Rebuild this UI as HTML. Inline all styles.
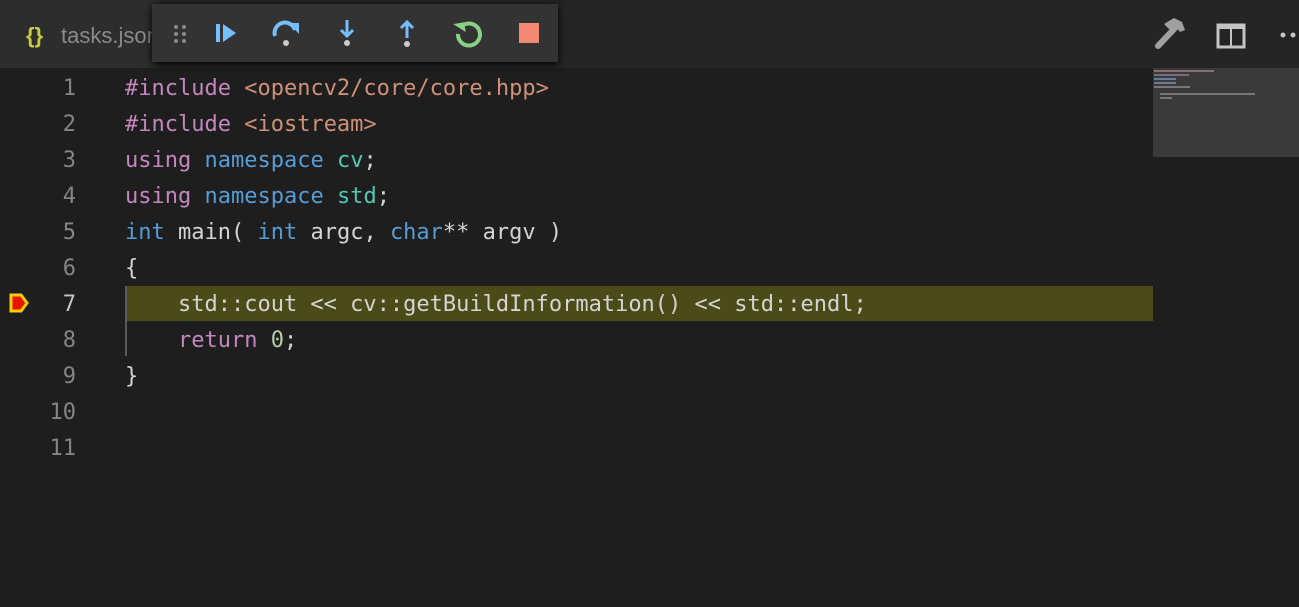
<!DOCTYPE html>
<html><head><meta charset="utf-8"><style>
body{margin:0;width:1299px;height:607px;background:#1e1e1e;overflow:hidden;position:relative;font-family:"DejaVu Sans Mono",monospace}
.tabbar{position:absolute;left:0;top:0;width:1299px;height:68px;background:#252526}
.tab{position:absolute;left:0;top:0;height:68px;width:160px;background:#2d2d2d;color:#8b8b8b;font:22px "Liberation Sans",sans-serif;line-height:72px}
.tb{position:absolute;left:152px;top:4px;width:406px;height:58px;background:#333;box-shadow:0 2px 8px #000}
.ln{position:absolute;left:0;width:76px;text-align:right;color:#858585;font-size:22px;line-height:36px}
.code{position:absolute;left:125px;font-size:22px;line-height:36px;color:#d4d4d4;white-space:pre}
.k{color:#c586c0}.s{color:#ce9178}.b{color:#569cd6}.t{color:#4ec9b0}.n{color:#b5cea8}
.mm{position:absolute;height:2px}
</style></head><body>
<div class="tabbar"></div>
<div class="tab"><span style="position:absolute;left:26px;color:#cbcb41;font-weight:bold">{}</span><span style="position:absolute;left:61px">tasks.json</span></div>
<div class="tb">
<svg width="406" height="58" style="position:absolute;left:0;top:0">
<g fill="#8a8a8a"><circle cx="24" cy="23" r="2"/><circle cx="32" cy="23" r="2"/><circle cx="24" cy="30" r="2"/><circle cx="32" cy="30" r="2"/><circle cx="24" cy="37" r="2"/><circle cx="32" cy="37" r="2"/></g>
<rect x="64" y="20" width="4" height="18" fill="#75beff"/><path d="M71 20 L84 29 L71 38Z" fill="#75beff"/>
<path d="M123 32 A10 10 0 0 1 143 26" stroke="#75beff" stroke-width="4" fill="none"/><path d="M137 19 L147 19 L147 30Z" fill="#75beff"/><circle cx="134" cy="39" r="3" fill="#ccc"/>
<path d="M195 16 V32 M189 26 L195 32 L201 26" stroke="#75beff" stroke-width="3" fill="none"/><circle cx="195" cy="39" r="3" fill="#ccc"/>
<path d="M255 34 V18 M249 24 L255 18 L261 24" stroke="#75beff" stroke-width="3" fill="none"/><circle cx="255" cy="40" r="3" fill="#ccc"/>
<path d="M310 22 A11 11 0 1 1 306 30" stroke="#89d185" stroke-width="4" fill="none"/><path d="M302 19 L313 19 L313 29 Z" fill="#89d185" transform="rotate(-10 308 24)"/>
<rect x="367" y="19" width="20" height="20" fill="#f48771"/>
</svg></div>
<svg width="150" height="68" style="position:absolute;left:1150px;top:0">
<path d="M8 46 L26 27" stroke="#a0a0a0" stroke-width="6" stroke-linecap="round"/><path d="M14 24 L24 18 L32 22 L35 30 L30 32 L26 27 L20 30Z" fill="#a0a0a0"/>
<rect x="68" y="25" width="26" height="22" fill="none" stroke="#c5c5c5" stroke-width="3"/><rect x="68" y="25" width="26" height="4" fill="#c5c5c5"/><rect x="80" y="25" width="2" height="22" fill="#c5c5c5"/>
<circle cx="133" cy="35" r="2.5" fill="#c5c5c5"/><circle cx="143" cy="35" r="2.5" fill="#c5c5c5"/>
</svg>
<div style="position:absolute;left:1153px;top:68px;width:146px;height:89px;background:#3a3a3a"></div>
<div class="mm" style="left:1154px;top:70px;width:60px;background:#8a6a70"></div>
<div class="mm" style="left:1154px;top:74px;width:35px;background:#7a6a80"></div>
<div class="mm" style="left:1154px;top:78px;width:22px;background:#6a7a9a"></div>
<div class="mm" style="left:1154px;top:82px;width:22px;background:#6a7a9a"></div>
<div class="mm" style="left:1154px;top:86px;width:36px;background:#777"></div>
<div class="mm" style="left:1160px;top:93px;width:95px;background:#777"></div>
<div class="mm" style="left:1160px;top:97px;width:12px;background:#777"></div>
<div style="position:absolute;left:125px;top:286px;width:1028px;height:35px;background:#4b4b18"></div>
<div style="position:absolute;left:125px;top:286px;width:2px;height:70px;background:#5a5a5a"></div>
<svg width="20" height="20" style="position:absolute;left:9px;top:293px"><path d="M2 2 H12 L18 10 L12 18 H2Z" fill="#e51400" stroke="#ffcc00" stroke-width="3"/></svg>
<div class="ln" style="top:71px">1<br>2<br>3<br>4<br>5<br>6<br><span style="color:#c6c6c6">7</span><br>8<br>9<br>10<br>11</div>
<div class="code" style="top:71px"><span class="k">#include</span> <span class="s">&lt;opencv2/core/core.hpp&gt;</span>
<span class="k">#include</span> <span class="s">&lt;iostream&gt;</span>
<span class="k">using</span> <span class="b">namespace</span> <span class="t">cv</span>;
<span class="k">using</span> <span class="b">namespace</span> <span class="t">std</span>;
<span class="b">int</span> main( <span class="b">int</span> argc, <span class="b">char</span>** argv )
{
    std::cout &lt;&lt; cv::getBuildInformation() &lt;&lt; std::endl;
    <span class="k">return</span> <span class="n">0</span>;
}</div>
</body></html>
